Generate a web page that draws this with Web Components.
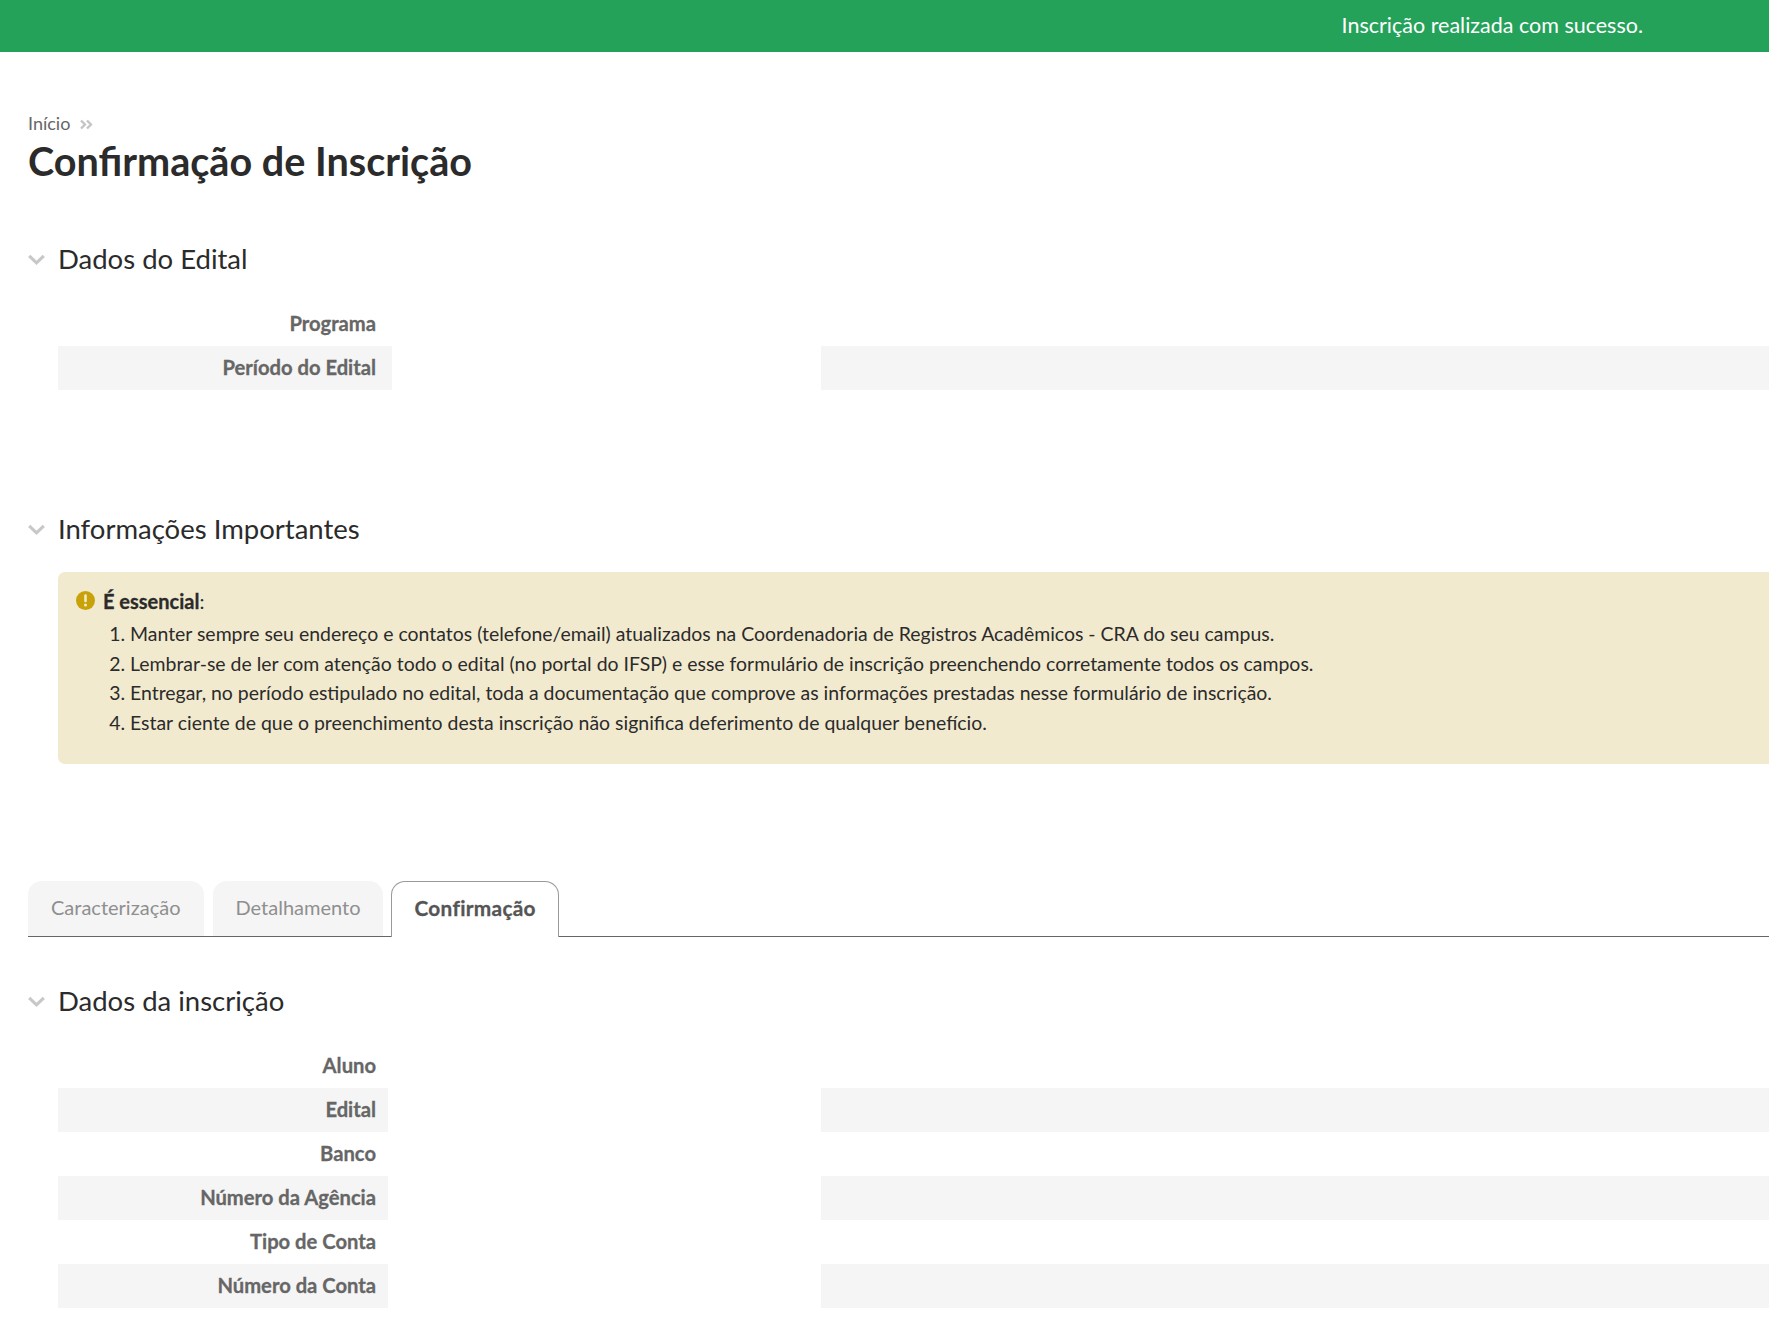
<!DOCTYPE html>
<html lang="pt-BR">
<head>
<meta charset="utf-8">
<title>Confirmação de Inscrição</title>
<style>
html, body { margin: 0; padding: 0; background: #fff; overflow: hidden; }
body { font-family: Lato, "Liberation Sans", sans-serif; color: #2b2b2b; height: 1335px; }
main { display: block; padding: 59px 0 0 28px; }
</style>
</head>
<body>
<success-banner>Inscrição realizada com sucesso.</success-banner>
<main>
  <page-title crumb="Início">Confirmação de Inscrição</page-title>

  <collapse-section style="margin-top:52px" label="Dados do Edital">
    <data-table labels="Programa|Período do Edital" label-width="334" label-pad="16"></data-table>
  </collapse-section>

  <collapse-section style="margin-top:118px" label="Informações Importantes">
    <notice-box heading="É essencial">
      <li>Manter sempre seu endereço e contatos (telefone/email) atualizados na Coordenadoria de Registros Acadêmicos - CRA do seu campus.</li>
      <li>Lembrar-se de ler com atenção todo o edital (no portal do IFSP) e esse formulário de inscrição preenchendo corretamente todos os campos.</li>
      <li>Entregar, no período estipulado no edital, toda a documentação que comprove as informações prestadas nesse formulário de inscrição.</li>
      <li>Estar ciente de que o preenchimento desta inscrição não significa deferimento de qualquer benefício.</li>
    </notice-box>
  </collapse-section>

  <tab-strip style="margin-top:117px" tabs="Caracterização|Detalhamento|Confirmação" active="2"></tab-strip>

  <collapse-section style="margin-top:43px" label="Dados da inscrição">
    <data-table labels="Aluno|Edital|Banco|Número da Agência|Tipo de Conta|Número da Conta" label-width="330" label-pad="12"></data-table>
  </collapse-section>
</main>

<script>
class SuccessBanner extends HTMLElement {
    constructor() {
        super();
        this.attachShadow({ mode: 'open' });
    }

    connectedCallback() {
        this.shadowRoot.innerHTML = `
        <style>
            :host {
                display: flex;
                justify-content: flex-end;
                align-items: center;
                box-sizing: border-box;
                height: 52px;
                padding: 0 126px 2px 0;
                background: #25a25a;
                color: #fff;
                font-size: 21.500px;
            }
        </style>
        <slot></slot>
        `;
    }
}

class PageTitle extends HTMLElement {
    constructor() {
        super();
        this.attachShadow({ mode: 'open' });
    }

    connectedCallback() {
        const crumb = this.getAttribute('crumb') || '';
        this.shadowRoot.innerHTML = `
        <style>
            :host { display: block; }
            .crumb {
                display: flex;
                align-items: center;
                gap: 10px;
                height: 24px;
                font-size: 18px;
                color: #666;
            }
            svg { width: 13px; height: 13px; margin-top: 2px; }
            h1 {
                margin: 1px 0 0;
                font-size: 39.600px;
                line-height: 50px;
                font-weight: 700;
                color: #2b2b2b;
            }
        </style>
        <div class="crumb">
            <span>${crumb}</span>
            <svg viewBox="0 0 13 13" fill="none" stroke="#c4c4c4" stroke-width="2.300">
                <path d="M1 2.500l4 4-4 4M7 2.500l4 4-4 4"/>
            </svg>
        </div>
        <h1><slot></slot></h1>
        `;
    }
}

class CollapseSection extends HTMLElement {
    constructor() {
        super();
        this.attachShadow({ mode: 'open' });
    }

    connectedCallback() {
        const label = this.getAttribute('label') || '';
        this.shadowRoot.innerHTML = `
        <style>
            :host { display: block; }
            .head {
                display: flex;
                align-items: center;
                height: 40px;
                gap: 13px;
                font-size: 27.500px;
                color: #2b2b2b;
            }
            svg { width: 17px; height: 11px; flex: none; margin-top: 2px; }
            .body { margin: 24px 0 0 30px; }
        </style>
        <div class="head">
            <svg viewBox="0 0 17 11" fill="none" stroke="#c8c8c8" stroke-width="3.200">
                <path d="M1.200 1.800l7.300 7 7.300-7"/>
            </svg>
            <span>${label}</span>
        </div>
        <div class="body"><slot></slot></div>
        `;
    }
}

class DataTable extends HTMLElement {
    constructor() {
        super();
        this.attachShadow({ mode: 'open' });
    }

    connectedCallback() {
        const labels = (this.getAttribute('labels') || '').split('|');
        const width = this.getAttribute('label-width') || '330';
        const pad = this.getAttribute('label-pad') || '12';
        const rows = labels.map((label) => `
            <div class="row">
                <div class="label">${label}</div>
                <div class="gap"></div>
                <div class="value"></div>
            </div>`).join('');

        this.shadowRoot.innerHTML = `
        <style>
            :host { display: block; }
            .row {
                display: grid;
                grid-template-columns: ${width}px 1fr 948px;
                height: 44px;
            }
            .label {
                display: flex;
                align-items: center;
                justify-content: flex-end;
                padding: 0 ${pad}px 2px 0;
                font-size: 20.200px;
                font-weight: 700;
                -webkit-text-stroke: 0.3px #666;
                color: #666;
            }
            .row:nth-child(even) .label,
            .row:nth-child(even) .value { background: #f5f5f5; }
        </style>
        <div class="rows">${rows}</div>
        `;
    }
}

class NoticeBox extends HTMLElement {
    constructor() {
        super();
        this.attachShadow({ mode: 'open' });
    }

    connectedCallback() {
        const heading = this.getAttribute('heading') || '';
        this.shadowRoot.innerHTML = `
        <style>
            :host {
                display: block;
                box-sizing: border-box;
                height: 192px;
                padding: 16px 18px;
                background: #f2eace;
                border-radius: 7px 0 0 7px;
                font-size: 19.450px;
                color: #2b2b2b;
            }
            .title {
                display: flex;
                align-items: center;
                gap: 8px;
                height: 26px;
                font-size: 20px;
            }
            svg { width: 19px; height: 19px; flex: none; margin-top: -1px; }
            b { font-weight: 700; -webkit-text-stroke: 0.3px #2b2b2b; }
            ol { margin: 5px 0 0; padding-left: 54px; line-height: 29.500px; }
            ::slotted(li)::marker { font-size: 19.450px; }
            ::slotted(li) { list-style-position: outside; text-indent: 0; }
        </style>
        <div class="title">
            <svg viewBox="0 0 19 19">
                <circle cx="9.500" cy="9.500" r="9.500" fill="#c8a208"/>
                <path d="M9.500 4.500v5.500" stroke="#f2eace" stroke-width="2.600" stroke-linecap="round"/>
                <circle cx="9.500" cy="14" r="1.500" fill="#f2eace"/>
            </svg>
            <span><b>${heading}</b>:</span>
        </div>
        <ol><slot></slot></ol>
        `;
    }
}

class TabStrip extends HTMLElement {
    constructor() {
        super();
        this.attachShadow({ mode: 'open' });
    }

    connectedCallback() {
        const tabs = (this.getAttribute('tabs') || '').split('|');
        const active = parseInt(this.getAttribute('active') || '0', 10);
        const items = tabs.map((tab, i) =>
            `<div class="tab ${i === active ? 'active' : ''}">${tab}</div>`).join('');

        this.shadowRoot.innerHTML = `
        <style>
            :host {
                display: flex;
                gap: 9px;
                height: 56px;
                box-sizing: border-box;
                border-bottom: 1px solid #666;
            }
            .tab {
                display: flex;
                align-items: center;
                box-sizing: border-box;
                height: 55px;
                padding: 0 23px 4px;
                background: #f5f5f5;
                border-radius: 14px 14px 0 0;
                font-size: 20px;
                color: #8f8f8f;
            }
            .tab.active {
                height: 56px;
                margin-left: -1px;
                padding: 0 22px 4px;
                background: #fff;
                border: 1px solid #999;
                border-bottom: 0;
                font-size: 20.800px;
                font-weight: 700;
                letter-spacing: 0.3px;
                -webkit-text-stroke: 0.3px #555;
                color: #555;
            }
        </style>
        ${items}
        `;
    }
}

customElements.define('success-banner', SuccessBanner);
customElements.define('page-title', PageTitle);
customElements.define('collapse-section', CollapseSection);
customElements.define('data-table', DataTable);
customElements.define('notice-box', NoticeBox);
customElements.define('tab-strip', TabStrip);
</script>
</body>
</html>
